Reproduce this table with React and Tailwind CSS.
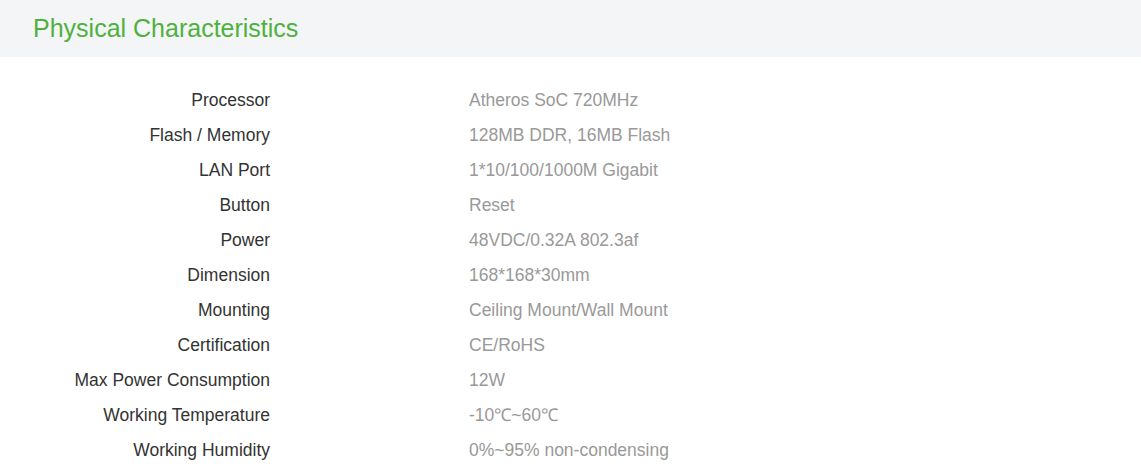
import React from "react";

const specs = [
  ["Processor", "Atheros SoC 720MHz"],
  ["Flash / Memory", "128MB DDR, 16MB Flash"],
  ["LAN Port", "1*10/100/1000M Gigabit"],
  ["Button", "Reset"],
  ["Power", "48VDC/0.32A 802.3af"],
  ["Dimension", "168*168*30mm"],
  ["Mounting", "Ceiling Mount/Wall Mount"],
  ["Certification", "CE/RoHS"],
  ["Max Power Consumption", "12W"],
  ["Working Temperature", "-10℃~60℃"],
  ["Working Humidity", "0%~95% non-condensing"],
];

export default function App() {
  return (
    <div className="w-[1141px] h-[469px] bg-white font-['Liberation_Sans',Arial,sans-serif] overflow-hidden">
      <div className="h-[57px] bg-[#f4f5f7] flex items-center px-[33px]">
        <h2 className="text-[25px] text-[#4fb13d] leading-none">Physical Characteristics</h2>
      </div>
      <div className="pt-[26px]">
        {specs.map(([label, value]) => (
          <div key={label} className="grid grid-cols-[270px_1fr] gap-[199px] h-[35px] items-center text-[17.5px]">
            <div className="text-right text-[#333]">{label}</div>
            <div className="text-[#999]">{value}</div>
          </div>
        ))}
      </div>
    </div>
  );
}
